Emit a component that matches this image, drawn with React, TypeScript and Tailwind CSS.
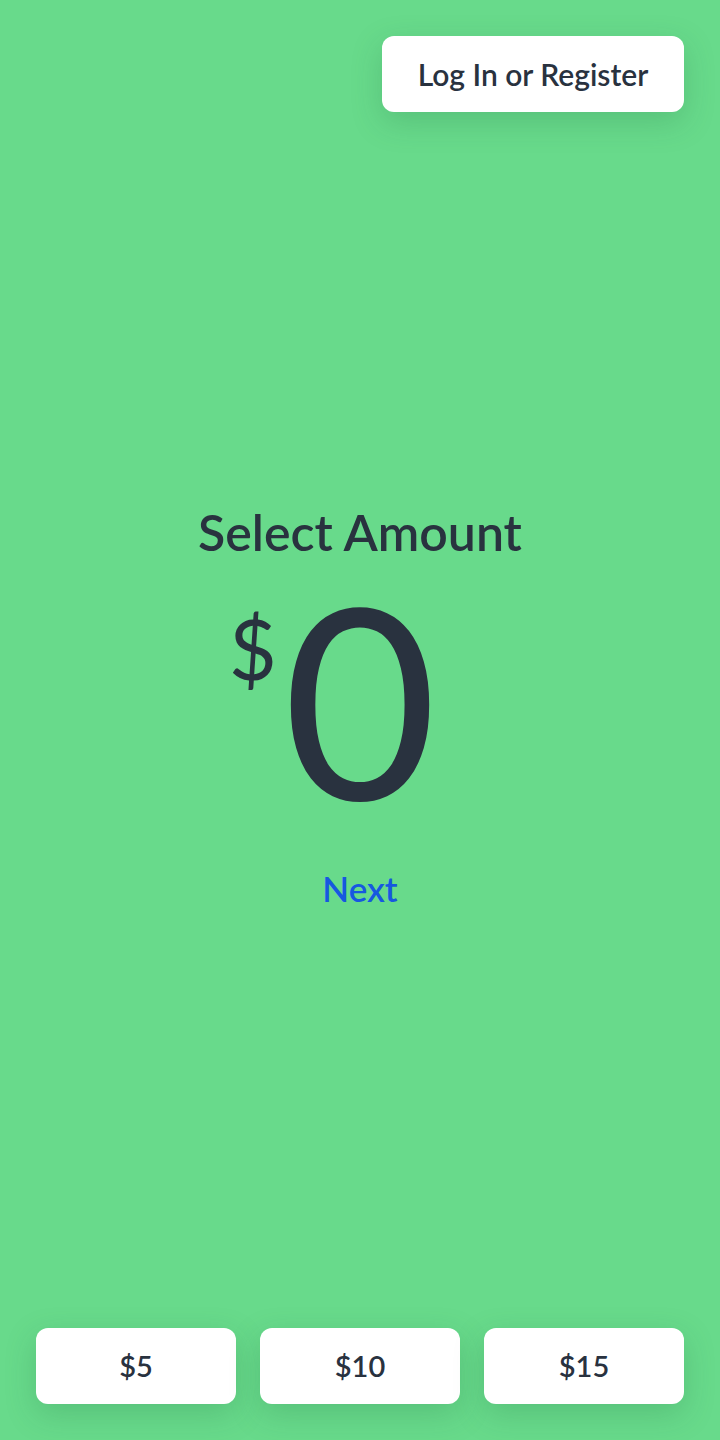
export default function App() {
  return (
    <div
      className="flex h-[1440px] w-[720px] flex-col bg-[#68da8b] text-[#29323f]"
      style={{ fontFamily: "Lato, 'Open Sans', sans-serif" }}
    >
      {/* Top bar */}
      <div className="flex justify-end px-9 pt-9">
        <button className="h-[76px] w-[302px] rounded-xl bg-white text-[30px] font-semibold shadow-[0_10px_30px_rgba(40,120,70,0.25)]">
          Log In or Register
        </button>
      </div>

      {/* Amount */}
      <div className="flex flex-1 flex-col items-center pt-[390px]">
        <h1 className="text-[50px] font-semibold leading-[60px]">Select Amount</h1>
        <div className="relative mt-[15px]">
          <span className="absolute right-full top-[30px] mr-[6px] text-[83px] leading-none">$</span>
          <span className="block text-[266px] leading-[240px]">0</span>
        </div>
        <button className="mt-[45px] text-[35px] font-semibold text-[#1658e0]">Next</button>
      </div>

      {/* Quick amounts */}
      <div className="grid grid-cols-3 gap-6 px-9 pb-9">
        {["$5", "$10", "$15"].map((v) => (
          <button
            key={v}
            className="h-[76px] rounded-xl bg-white text-[29px] font-semibold shadow-[0_10px_30px_rgba(40,120,70,0.25)]"
          >
            {v}
          </button>
        ))}
      </div>
    </div>
  )
}
